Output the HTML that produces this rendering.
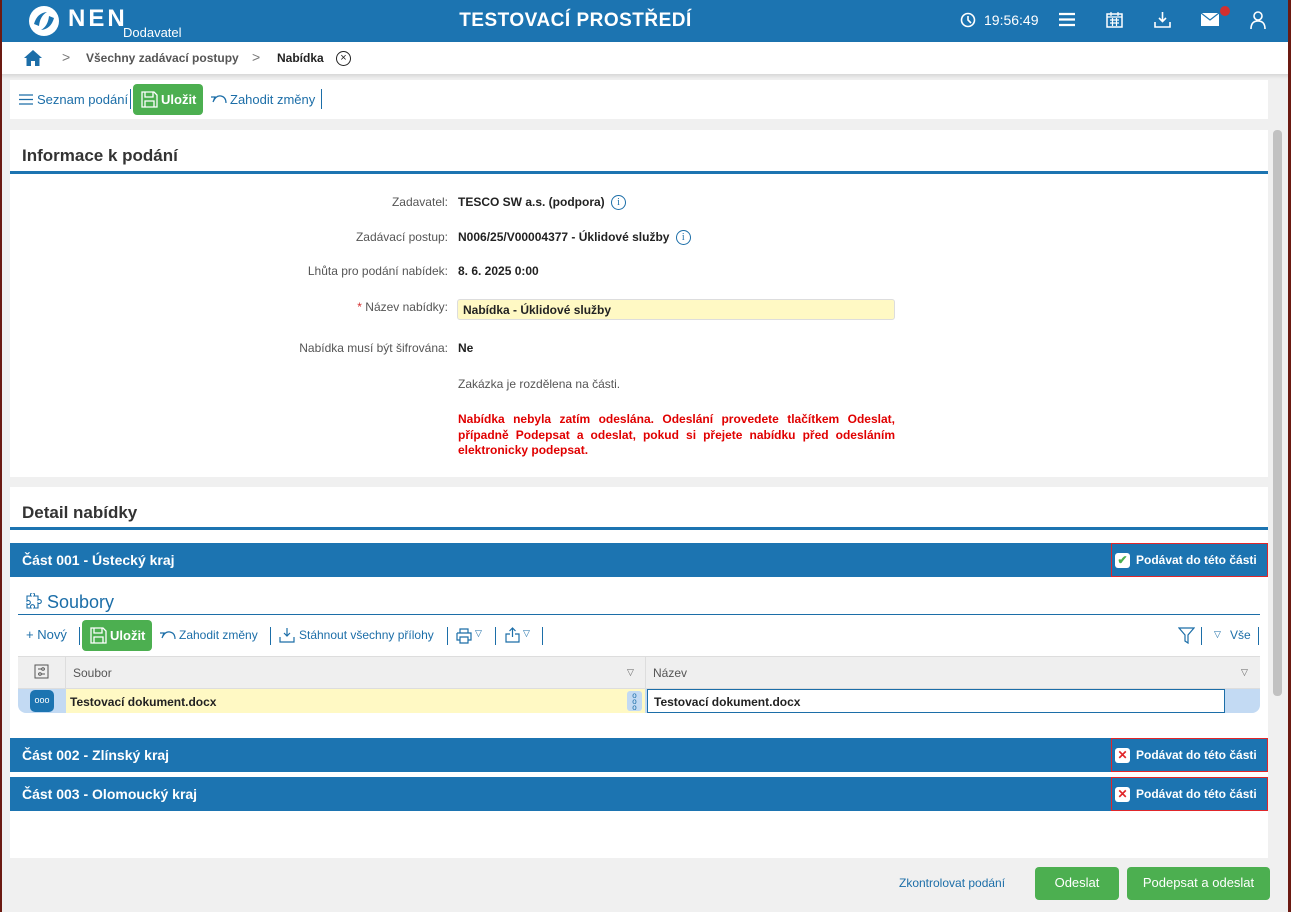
<!DOCTYPE html>
<html><head><meta charset="utf-8">
<style>
*{box-sizing:border-box;margin:0;padding:0}
body{width:1291px;height:912px;overflow:hidden;background:#f0f0f0;font-family:"Liberation Sans",Arial,sans-serif;font-size:12px;color:#222;position:relative}
.abs{position:absolute}
.hdr{left:0;top:0;width:1291px;height:42px;background:#1c74b1;color:#fff}
.bc{left:0;top:42px;width:1291px;height:32px;background:#fff;box-shadow:0 2px 4px rgba(0,0,0,.12)}
.lb{left:0;top:0;width:2px;height:912px;background:#6b1a12}
.rb{left:1288px;top:0;width:3px;height:912px;background:#6b1a12}
.box{background:#fff}
.blue{color:#1c6ea8}
.btn{background:#4caf50;color:#fff;border-radius:4px}
.lbl{right:843px;color:#555;font-size:12px;text-align:right;white-space:nowrap}
.val{left:458px;font-weight:bold;font-size:12px;white-space:nowrap}
.band{left:10px;width:1258px;height:34px;background:#1c74b1;color:#fff;font-weight:bold;font-size:14px;padding:9px 0 0 12px}
.chk{left:1111px;width:157px;height:34px;border:1px solid #e0262a;color:#fff;font-weight:bold;font-size:12px;padding:9px 0 0 24px}
.chk i{position:absolute;left:3px;top:9px;width:15px;height:15px;background:#fff;border-radius:3px;font-style:normal;font-size:12px;text-align:center;line-height:15px}
.info{display:inline-block;width:15px;height:15px;border:1px solid #1c6ea8;border-radius:50%;color:#1c6ea8;font-size:10px;text-align:center;line-height:13px;font-weight:normal;font-family:"Liberation Serif",serif;vertical-align:middle;margin-left:3px}
</style></head><body>
<div class="abs hdr">
 <svg class="abs" style="left:27px;top:4px" width="34" height="34" viewBox="0 0 34 34"><circle cx="17" cy="17" r="15" fill="#fff"/><path d="M7 20 Q10 9 20 8 Q13 12 12 22 Z" fill="#1c74b1"/><path d="M27 14 Q24 25 14 26 Q21 22 22 12 Z" fill="#1c74b1"/></svg>
 <div class="abs" style="left:68px;top:5px;font-size:24px;font-weight:bold;letter-spacing:3px">NEN</div>
 <div class="abs" style="left:123px;top:25px;font-size:13px">Dodavatel</div>
 <div class="abs" style="left:0;width:1151px;top:10px;text-align:center;font-size:19px;font-weight:bold;letter-spacing:.5px">TESTOVACÍ PROSTŘEDÍ</div>
 <svg class="abs" style="left:960px;top:12px" width="16" height="16" viewBox="0 0 16 16"><circle cx="8" cy="8" r="6.5" fill="none" stroke="#fff" stroke-width="1.6"/><path d="M8 4v4l3 3" stroke="#fff" stroke-width="1.6" fill="none"/></svg>
 <div class="abs" style="left:984px;top:12px;font-size:14px">19:56:49</div>
 <svg class="abs" style="left:1059px;top:12px" width="17" height="15"><path d="M0 2h16M0 7.5h16M0 13h16" stroke="#fff" stroke-width="2.2"/></svg>
 <svg class="abs" style="left:1106px;top:11px" width="17" height="17" viewBox="0 0 17 17"><rect x="1" y="3" width="15" height="13" fill="none" stroke="#fff" stroke-width="1.5"/><path d="M1 6h15M5 1v4M12 1v4M4 9h9M4 12h9M6.5 7v8M10.5 7v8" stroke="#fff" stroke-width="1.2"/></svg>
 <svg class="abs" style="left:1154px;top:11px" width="17" height="17" viewBox="0 0 17 17"><path d="M8.5 1v9M5 7l3.5 3.5L12 7M1 11v5h15v-5" stroke="#fff" stroke-width="1.6" fill="none"/></svg>
 <svg class="abs" style="left:1201px;top:13px" width="18" height="13" viewBox="0 0 18 13"><rect x="0" y="0" width="18" height="13" fill="#fff"/><path d="M0 0l9 7 9-7" stroke="#1c74b1" stroke-width="1.2" fill="none"/></svg>
 <div class="abs" style="left:1220px;top:6px;width:10px;height:10px;border-radius:50%;background:#d32f2f"></div>
 <svg class="abs" style="left:1250px;top:11px" width="16" height="18" viewBox="0 0 16 18"><circle cx="8" cy="5" r="4" fill="none" stroke="#fff" stroke-width="1.6"/><path d="M1 18q0-8 7-8t7 8" stroke="#fff" stroke-width="1.6" fill="none"/></svg>
</div>
<div class="abs bc">
 <svg class="abs" style="left:24px;top:8px" width="18" height="16" viewBox="0 0 18 16"><path d="M9 0L0 8h2.5v8h4.5v-5h4v5h4.5v-8H18z" fill="#1c6ea8"/></svg>
 <div class="abs" style="left:62px;top:7px;color:#777;font-size:14px">&gt;</div>
 <div class="abs" style="left:86px;top:9px;color:#555;font-weight:bold">Všechny zadávací postupy</div>
 <div class="abs" style="left:252px;top:7px;color:#777;font-size:14px">&gt;</div>
 <div class="abs" style="left:277px;top:9px;font-weight:bold">Nabídka</div>
 <div class="abs" style="left:336px;top:9px;width:15px;height:15px;border:1.3px solid #222;border-radius:50%;text-align:center;line-height:12px;font-size:11px">×</div>
</div>
<div class="abs lb"></div><div class="abs rb"></div>
<div class="abs" style="left:1268px;top:119px;width:20px;height:793px;background:#f0f0f0"></div>
<div class="abs" style="left:1273px;top:130px;width:9px;height:566px;background:#c1c1c1;border-radius:4px"></div>

<div class="abs box" style="left:10px;top:80px;width:1258px;height:39px">
 <svg class="abs" style="left:9px;top:14px" width="14" height="11"><path d="M0 1h14M0 5.5h14M0 10h14" stroke="#1c6ea8" stroke-width="1.2"/></svg>
 <div class="abs blue" style="left:27px;top:12px;font-size:13px">Seznam podání</div>
 <div class="abs" style="left:120px;top:9px;width:1px;height:20px;background:#1c6ea8"></div>
 <div class="abs btn" style="left:123px;top:4px;width:70px;height:31px;font-weight:bold;padding:8px 0 0 28px;font-size:13px">Uložit</div>
 <svg class="abs" style="left:131px;top:11px" width="17" height="17" viewBox="0 0 17 17"><path d="M1 1h12l3 3v12H1z M4 1v5h8V1 M4 16v-6h9v6" fill="none" stroke="#fff" stroke-width="1.3"/></svg>
 <svg class="abs" style="left:200px;top:13px" width="17" height="12" viewBox="0 0 17 12"><path d="M1 4h4l-2 5 M3 9q3-7 8-6t5 7" fill="none" stroke="#1c6ea8" stroke-width="1.2"/></svg>
 <div class="abs blue" style="left:220px;top:12px;font-size:13px">Zahodit změny</div>
 <div class="abs" style="left:311px;top:9px;width:1px;height:20px;background:#1c6ea8"></div>
</div>

<div class="abs box" style="left:10px;top:130px;width:1258px;height:347px">
 <div class="abs" style="left:12px;top:16px;font-size:17px;font-weight:bold;color:#333">Informace k podání</div>
 <div class="abs" style="left:0;top:41px;width:1258px;height:3px;background:#1c74b1"></div>
</div>
<div class="abs lbl" style="top:195px">Zadavatel:</div>
<div class="abs val" style="top:195px">TESCO SW a.s. (podpora) <span class="info">i</span></div>
<div class="abs lbl" style="top:230px">Zadávací postup:</div>
<div class="abs val" style="top:230px">N006/25/V00004377 - Úklidové služby <span class="info">i</span></div>
<div class="abs lbl" style="top:264px">Lhůta pro podání nabídek:</div>
<div class="abs val" style="top:264px">8. 6. 2025 0:00</div>
<div class="abs lbl" style="top:300px"><span style="color:#d32f2f">*</span> Název nabídky:</div>
<div class="abs" style="left:457px;top:299px;width:438px;height:21px;background:#fff9c4;border:1px solid #ddd;border-radius:3px;font-weight:bold;padding:3px 0 0 5px">Nabídka - Úklidové služby</div>
<div class="abs lbl" style="top:341px">Nabídka musí být šifrována:</div>
<div class="abs val" style="top:341px">Ne</div>
<div class="abs" style="left:458px;top:377px;color:#555">Zakázka je rozdělena na části.</div>
<div class="abs" style="left:458px;top:412px;width:437px;color:#e00000;font-weight:bold;text-align:justify;line-height:15.5px">Nabídka nebyla zatím odeslána. Odeslání provedete tlačítkem Odeslat, případně Podepsat a odeslat, pokud si přejete nabídku před odesláním elektronicky podepsat.</div>

<div class="abs box" style="left:10px;top:487px;width:1258px;height:371px">
 <div class="abs" style="left:12px;top:16px;font-size:17px;font-weight:bold;color:#333">Detail nabídky</div>
 <div class="abs" style="left:0;top:40px;width:1258px;height:3px;background:#1c74b1"></div>
</div>
<div class="abs band" style="top:543px">Část 001 - Ústecký kraj</div>
<div class="abs chk" style="top:543px"><i style="color:#4caf50">✔</i>Podávat do této části</div>

<svg class="abs" style="left:24px;top:593px" width="18" height="18" viewBox="0 0 18 18"><path d="M3 3h4a2 2 0 1 1 3 0h4v4a2 2 0 1 1 0 3v5h-4a2 2 0 1 0-3 0H3v-4a2 2 0 1 0 0-3z" fill="none" stroke="#1c6ea8" stroke-width="1.1"/></svg>
<div class="abs blue" style="left:47px;top:592px;font-size:18px">Soubory</div>
<div class="abs" style="left:18px;top:614px;width:1242px;height:1px;background:#1c6ea8"></div>
<div class="abs blue" style="left:26px;top:627px;font-size:13px">+ Nový</div>
<div class="abs" style="left:79px;top:627px;width:1px;height:18px;background:#1c6ea8"></div>
<div class="abs btn" style="left:82px;top:620px;width:70px;height:31px;font-weight:bold;padding:8px 0 0 28px;font-size:13px">Uložit</div>
<svg class="abs" style="left:90px;top:627px" width="17" height="17" viewBox="0 0 17 17"><path d="M1 1h12l3 3v12H1z M4 1v5h8V1 M4 16v-6h9v6" fill="none" stroke="#fff" stroke-width="1.3"/></svg>
<svg class="abs" style="left:159px;top:629px" width="17" height="12" viewBox="0 0 17 12"><path d="M1 4h4l-2 5 M3 9q3-7 8-6t5 7" fill="none" stroke="#1c6ea8" stroke-width="1.2"/></svg>
<div class="abs blue" style="left:179px;top:628px">Zahodit změny</div>
<div class="abs" style="left:270px;top:627px;width:1px;height:18px;background:#1c6ea8"></div>
<svg class="abs" style="left:279px;top:627px" width="16" height="16" viewBox="0 0 16 16"><path d="M8 1v8M5 6l3 3 3-3M1 10v5h14v-5" fill="none" stroke="#1c6ea8" stroke-width="1.2"/></svg>
<div class="abs blue" style="left:299px;top:628px">Stáhnout všechny přílohy</div>
<div class="abs" style="left:447px;top:627px;width:1px;height:18px;background:#1c6ea8"></div>
<svg class="abs" style="left:456px;top:628px" width="16" height="16" viewBox="0 0 16 16"><path d="M4 5V1h8v4M1 5h14v7h-3M4 12H1V5M4 9h8v6H4z" fill="none" stroke="#1c6ea8" stroke-width="1.2"/></svg>
<div class="abs blue" style="left:475px;top:628px;font-size:9px">▽</div>
<div class="abs" style="left:495px;top:627px;width:1px;height:18px;background:#1c6ea8"></div>
<svg class="abs" style="left:505px;top:627px" width="15" height="16" viewBox="0 0 15 16"><path d="M7.5 1v9M4.5 4l3-3 3 3M5 7H1v8h13V7h-4" fill="none" stroke="#1c6ea8" stroke-width="1.2"/></svg>
<div class="abs blue" style="left:523px;top:628px;font-size:9px">▽</div>
<div class="abs" style="left:542px;top:627px;width:1px;height:18px;background:#1c6ea8"></div>
<svg class="abs" style="left:1178px;top:627px" width="17" height="17" viewBox="0 0 17 17"><path d="M1 1h15l-6 7v8l-3-2V8z" fill="none" stroke="#1c6ea8" stroke-width="1.2"/></svg>
<div class="abs" style="left:1201px;top:627px;width:1px;height:18px;background:#1c6ea8"></div>
<div class="abs blue" style="left:1214px;top:629px;font-size:9px">▽</div>
<div class="abs blue" style="left:1230px;top:628px">Vše</div>
<div class="abs" style="left:1258px;top:627px;width:1px;height:18px;background:#1c6ea8"></div>

<div class="abs" style="left:18px;top:656px;width:1242px;height:33px;background:#efefef;border-top:1px solid #ddd;border-bottom:1px solid #ddd"></div>
<div class="abs" style="left:65px;top:656px;width:1px;height:57px;background:#ddd"></div>
<div class="abs" style="left:645px;top:656px;width:1px;height:33px;background:#ddd"></div>
<svg class="abs" style="left:34px;top:664px" width="15" height="15" viewBox="0 0 15 15"><rect x="1" y="1" width="13" height="13" fill="none" stroke="#555"/><path d="M4 5h7M4 10h7" stroke="#555"/><circle cx="9" cy="5" r="1.3" fill="#fff" stroke="#555"/><circle cx="6" cy="10" r="1.3" fill="#fff" stroke="#555"/></svg>
<div class="abs" style="left:73px;top:666px;color:#555">Soubor</div>
<div class="abs" style="left:627px;top:667px;color:#666;font-size:9px">▽</div>
<div class="abs" style="left:653px;top:666px;color:#555">Název</div>
<div class="abs" style="left:1241px;top:667px;color:#666;font-size:9px">▽</div>
<div class="abs" style="left:18px;top:689px;width:1242px;height:24px;background:#c3daf3;border-radius:0 0 8px 8px"></div>
<div class="abs" style="left:66px;top:689px;width:579px;height:24px;background:#fff9c4"></div>
<div class="abs" style="left:30px;top:690px;width:24px;height:22px;background:#1c74b1;border-radius:5px;color:#fff;font-size:9px;text-align:center;line-height:20px">ooo</div>
<div class="abs" style="left:70px;top:695px;font-weight:bold">Testovací dokument.docx</div>
<div class="abs" style="left:627px;top:691px;width:15px;height:20px;background:#c3daf3;border-radius:3px;color:#1c6ea8;font-size:8px;text-align:center;line-height:6px;padding-top:2px">o<br>o<br>o</div>
<div class="abs" style="left:647px;top:689px;width:578px;height:24px;background:#fff;border:1.5px solid #1c6ea8;font-weight:bold;padding:5px 0 0 6px">Testovací dokument.docx</div>

<div class="abs band" style="top:738px">Část 002 - Zlínský kraj</div>
<div class="abs chk" style="top:738px"><i style="color:#e0262a;font-weight:bold">✕</i>Podávat do této části</div>
<div class="abs band" style="top:777px">Část 003 - Olomoucký kraj</div>
<div class="abs chk" style="top:777px"><i style="color:#e0262a;font-weight:bold">✕</i>Podávat do této části</div>

<div class="abs blue" style="left:899px;top:876px">Zkontrolovat podání</div>
<div class="abs btn" style="left:1035px;top:867px;width:84px;height:33px;text-align:center;line-height:32px;font-size:13px">Odeslat</div>
<div class="abs btn" style="left:1127px;top:867px;width:143px;height:33px;text-align:center;line-height:32px;font-size:13px">Podepsat a odeslat</div>
</body></html>
